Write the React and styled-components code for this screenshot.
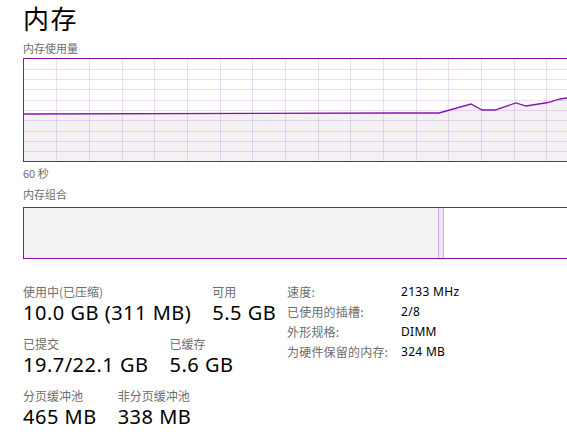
import React from "react";
import styled, { createGlobalStyle } from "styled-components";

const PURPLE = "#8b12ae";
const FONT = `"Segoe UI", "Noto Sans", "Noto Sans CJK SC", sans-serif`;

const Global = createGlobalStyle`
  html, body { margin: 0; padding: 0; background: #fff; }
  body { font-family: ${FONT}; color: #000; overflow: hidden; }
`;

const Page = styled.div`
  width: 567px;
  height: 437px;
  padding-left: 23px;
  box-sizing: border-box;
  overflow: hidden;
  display: flex;
  flex-direction: column;
`;

const Title = styled.h1`
  margin: 0 0 4px;
  font-family: "Noto Sans CJK SC", sans-serif;
  font-weight: 400;
  font-size: 26px;
  line-height: 36px;
  letter-spacing: 1.5px;
`;

const Caption = styled.div`
  font-family: "Noto Sans CJK SC", sans-serif;
  font-size: 11px;
  line-height: 16px;
  color: #6d6d6d;
  margin-top: ${(p) => p.$top || 0}px;
`;

const ChartBox = styled.div`
  margin-top: 2px;
  height: 104px;
  box-sizing: border-box;
  border: 1px solid ${PURPLE};
  border-right: none;
  display: flex;
`;

const ChartSvg = styled.svg`
  display: block;
  width: 100%;
  height: 100%;
`;

const CompBar = styled.div`
  margin-top: 5px;
  height: 52px;
  box-sizing: border-box;
  border: 1px solid ${PURPLE};
  border-right: none;
  display: flex;
`;

const Segment = styled.div`
  width: ${(p) => p.$w}px;
  flex: ${(p) => (p.$grow ? 1 : "none")};
  background: ${(p) => p.$bg};
  box-sizing: border-box;
  ${(p) => (p.$edged ? "border-left: 1px solid #cfa8dc; border-right: 1px solid #cfa8dc;" : "")}
`;

const Stats = styled.div`
  margin-top: 25px;
  display: flex;
`;

const LeftStats = styled.div`
  width: 264px;
  display: flex;
  flex-direction: column;
  gap: 10px;
`;

const StatRow = styled.div`
  display: flex;
  gap: 21px;
`;

const Stat = styled.div`
  display: flex;
  flex-direction: column;
`;

const StatLabel = styled.div`
  font-family: "Noto Sans CJK SC", sans-serif;
  font-size: 12px;
  line-height: 16px;
  color: #6d6d6d;
`;

const StatValue = styled.div`
  font-family: ${FONT};
  font-size: 20px;
  line-height: 26px;
  letter-spacing: 0.5px;
  white-space: nowrap;
`;

const InfoGrid = styled.div`
  display: grid;
  grid-template-columns: 114px auto;
  grid-auto-rows: 20px;
  align-items: center;
  margin-top: -3px;
`;

const InfoLabel = styled.div`
  font-family: "Noto Sans CJK SC", sans-serif;
  font-size: 12px;
  letter-spacing: 0.2px;
  color: #6d6d6d;
`;

const InfoValue = styled.div`
  font-family: ${FONT};
  font-size: 12px;
  letter-spacing: 0.3px;
  color: #000;
`;

const W = 543;
const H = 102;
const linePts = [
  [0, 55], [371, 54], [415, 54], [447, 45], [458, 51], [471, 51],
  [492, 44], [502, 47], [524, 43.5], [536, 40], [543, 39],
];
const GRID = "rgba(139,18,174,0.15)";

function MemoryChart() {
  const vLines = [];
  for (let k = 1; k < 18; k++) vLines.push(Math.round(32.67 * k - 0.5) + 0.5);
  const hLines = [10, 20, 30, 41, 51, 61, 72, 82, 92].map((y) => y + 0.5);
  const line = linePts.map((p) => p.join(",")).join(" ");
  const fill = `0,${H} ${line} ${W},${H}`;
  return (
    <ChartSvg viewBox={`0 0 ${W} ${H}`} preserveAspectRatio="none">
      <polygon points={fill} fill="#f3f1f4" />
      {vLines.map((x) => (
        <line key={"v" + x} x1={x} x2={x} y1={0} y2={H} stroke={GRID} strokeWidth="1" shapeRendering="crispEdges" />
      ))}
      {hLines.map((y) => (
        <line key={"h" + y} x1={0} x2={W} y1={y} y2={y} stroke={GRID} strokeWidth="1" shapeRendering="crispEdges" />
      ))}
      <polyline points={line} fill="none" stroke={PURPLE} strokeWidth="1.3" />
    </ChartSvg>
  );
}

export default function App() {
  return (
    <>
      <Global />
      <Page>
        <Title>内存</Title>
        <Caption>内存使用量</Caption>
        <ChartBox>
          <MemoryChart />
        </ChartBox>
        <Caption $top={3}>60 秒</Caption>
        <Caption $top={5}>内存组合</Caption>
        <CompBar>
          <Segment $w={414} $bg="#f3f1f4" />
          <Segment $w={6} $bg="#f1e6f5" $edged />
          <Segment $grow $bg="#fff" />
        </CompBar>
        <Stats>
          <LeftStats>
            <StatRow>
              <Stat>
                <StatLabel>使用中(已压缩)</StatLabel>
                <StatValue>10.0 GB (311 MB)</StatValue>
              </Stat>
              <Stat>
                <StatLabel>可用</StatLabel>
                <StatValue>5.5 GB</StatValue>
              </Stat>
            </StatRow>
            <StatRow>
              <Stat>
                <StatLabel>已提交</StatLabel>
                <StatValue>19.7/22.1 GB</StatValue>
              </Stat>
              <Stat>
                <StatLabel>已缓存</StatLabel>
                <StatValue>5.6 GB</StatValue>
              </Stat>
            </StatRow>
            <StatRow>
              <Stat>
                <StatLabel>分页缓冲池</StatLabel>
                <StatValue>465 MB</StatValue>
              </Stat>
              <Stat>
                <StatLabel>非分页缓冲池</StatLabel>
                <StatValue>338 MB</StatValue>
              </Stat>
            </StatRow>
          </LeftStats>
          <InfoGrid>
            <InfoLabel>速度:</InfoLabel>
            <InfoValue>2133 MHz</InfoValue>
            <InfoLabel>已使用的插槽:</InfoLabel>
            <InfoValue>2/8</InfoValue>
            <InfoLabel>外形规格:</InfoLabel>
            <InfoValue>DIMM</InfoValue>
            <InfoLabel>为硬件保留的内存:</InfoLabel>
            <InfoValue>324 MB</InfoValue>
          </InfoGrid>
        </Stats>
      </Page>
    </>
  );
}
